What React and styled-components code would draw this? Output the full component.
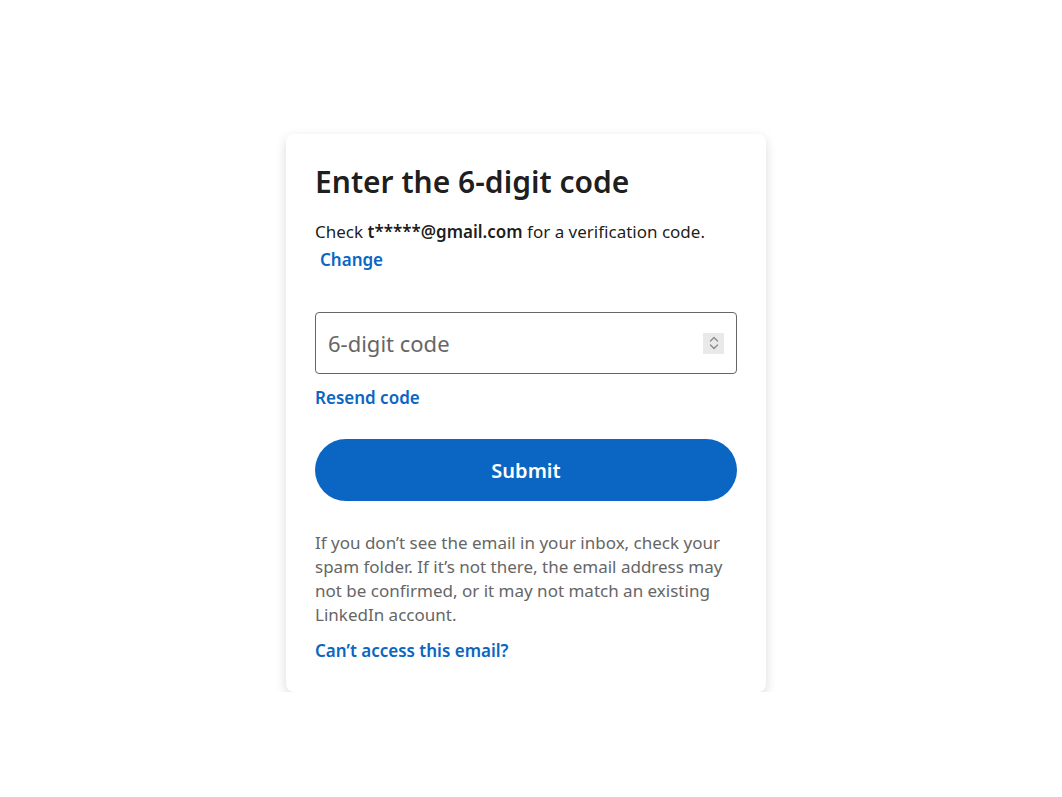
import React from 'react';
import styled, { createGlobalStyle } from 'styled-components';

const GlobalStyle = createGlobalStyle`
    body {
        margin: 0;
        background: #ffffff;
        font-family: "Noto Sans", "Open Sans", sans-serif;
        color: rgba(0, 0, 0, 0.9);
    }
`

/** page + card */
const Page = styled.div`
    display: flex;
    justify-content: center;
    padding: 134px 10px 0 0;
`
const Card = styled.div`
    width: 480px;
    box-sizing: border-box;
    padding: 28px 29px 29px;
    background: #fff;
    border-radius: 8px;
    box-shadow: 0 4px 12px rgba(0, 0, 0, 0.15);
    display: flex;
    flex-direction: column;
    align-items: flex-start;
`
const Title = styled.h1`
    margin: 0 0 16px;
    font-size: 30px;
    line-height: 40px;
    font-weight: 600;
`
const Desc = styled.p`
    margin: 0;
    font-size: 17px;
    line-height: 28px;
`
const Strong = styled.strong`
    font-weight: 600;
`
const Link = styled.a`
    display: inline-block;
    color: #0a66c2;
    font-weight: 600;
    font-size: 17px;
    line-height: 24px;
    text-decoration: none;
    cursor: pointer;
    margin-top: ${props => props.$top || 0}px;
    margin-left: ${props => props.$indent || 0}px;
`

/** code field */
const Field = styled.div`
    width: 100%;
    height: 62px;
    box-sizing: border-box;
    margin-top: 38px;
    border: 1px solid #666;
    border-radius: 4px;
    display: flex;
    align-items: center;
    padding: 0 12px;
`
const Input = styled.input`
    flex: 1;
    border: none;
    outline: none;
    font-family: inherit;
    font-size: 22px;
    color: rgba(0, 0, 0, 0.9);
    background: transparent;
    padding: 0;

    &::placeholder {
        color: #666;
    }
`
const Spinner = styled.div`
    width: 21px;
    height: 21px;
    background: #e9e9e9;
    display: flex;
    align-items: center;
    justify-content: center;
`
const SubmitButton = styled.button`
    width: 100%;
    height: 62px;
    margin-top: 29px;
    border: none;
    border-radius: 31px;
    background: #0a66c2;
    color: #fff;
    font-family: inherit;
    font-size: 20px;
    font-weight: 600;
    cursor: pointer;
`
const Help = styled.p`
    margin: 30px 0 0;
    font-size: 17px;
    line-height: 24px;
    color: #666;
`

const App = () => {
    return (
        <>
            <GlobalStyle />
            <Page>
                <Card>
                    <Title>Enter the 6-digit code</Title>
                    <Desc>
                        Check <Strong>t*****@gmail.com</Strong> for a verification code.
                        <br />
                        <Link $indent={5}>Change</Link>
                    </Desc>
                    <Field>
                        <Input placeholder='6-digit code' />
                        <Spinner>
                            <svg width='12' height='16' viewBox='0 0 12 16' fill='none' stroke='#8a8a8a' strokeWidth='1.3' strokeLinecap='round' strokeLinejoin='round'>
                                <path d='M2.5 6 L6 2.5 L9.5 6' />
                                <path d='M2.5 10 L6 13.5 L9.5 10' />
                            </svg>
                        </Spinner>
                    </Field>
                    <Link $top={12}>Resend code</Link>
                    <SubmitButton>Submit</SubmitButton>
                    <Help>
                        If you don’t see the email in your inbox, check your spam folder. If it’s not there, the email address may not be confirmed, or it may not match an existing LinkedIn account.
                    </Help>
                    <Link $top={12}>Can’t access this email?</Link>
                </Card>
            </Page>
        </>
    )
}

export default App;
